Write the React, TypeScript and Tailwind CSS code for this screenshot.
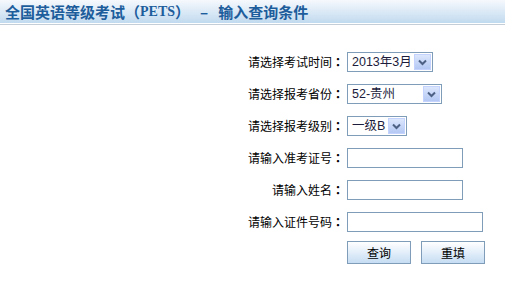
import React from "react";

const font = { fontFamily: '"Noto Sans CJK SC", "Noto Sans", sans-serif' };
const selFont = { fontFamily: '"Liberation Sans", "Noto Sans CJK SC", sans-serif' };
const tc = { fontFamily: '"Noto Sans CJK TC", sans-serif' };

function Arrow() {
  return (
    <div className="flex h-full w-[17px] items-center justify-center border border-[#c3d3fd] bg-gradient-to-b from-[#dce6fc] to-[#b4c8f4]">
      <svg width="9" height="7" viewBox="0 0 9 7">
        <path d="M1 1.5 L4.5 5 L8 1.5" fill="none" stroke="#4d6185" strokeWidth="2" />
      </svg>
    </div>
  );
}

function Select({ value, width }: { value: string; width: string }) {
  return (
    <div className={`flex h-[20px] ${width} items-stretch border border-[#7f9db9] bg-white p-[1px]`}>
      <div className="flex flex-1 items-center whitespace-nowrap pl-[3px] text-[12.5px] leading-none text-[#1c1c3c]" style={selFont}>
        {value}
      </div>
      <Arrow />
    </div>
  );
}

function Input({ width }: { width: string }) {
  return <div className={`h-[20px] ${width} border border-[#7f9db9] bg-white`} />;
}

function Row({ label, children }: { label: string; children: React.ReactNode }) {
  return (
    <div className="flex h-[32px] items-center">
      <div className="w-[344px] whitespace-nowrap text-right text-[12px] leading-none text-black" style={font}>
        {label}
        <span className="font-bold" style={tc}>：</span>
      </div>
      <div className="ml-[3px]">{children}</div>
    </div>
  );
}

function Button({ text }: { text: string }) {
  return (
    <div
      className="flex h-[23px] w-[64px] items-center justify-center border border-[#7f9db9] bg-gradient-to-b from-white to-[#c6ddf3] text-[12px] leading-none text-black"
      style={font}
    >
      {text}
    </div>
  );
}

export default function App() {
  return (
    <div className="h-[291px] w-[505px] overflow-hidden bg-white">
      <div className="flex h-[23px] items-center whitespace-nowrap bg-gradient-to-b from-[#f6f9fd] to-[#c1daef] pl-[5px] text-[15px] font-bold leading-none text-[#1d5d9c]" style={font}>
        <span>全国英语等级考试（</span>
        <span className="text-[14px]" style={{ fontFamily: '"Liberation Serif", serif' }}>PETS</span>
        <span>）</span>
        <span className="ml-[10px]">–</span>
        <span className="ml-[10px]">输入查询条件</span>
      </div>
      <div className="h-[1px] bg-white" />
      <div className="h-[1px] bg-[#c4ced8]" />
      <div className="mt-[21px]">
        <Row label="请选择考试时间">
          <Select value="2013年3月" width="w-[86px]" />
        </Row>
        <Row label="请选择报考省份">
          <Select value="52-贵州" width="w-[95px]" />
        </Row>
        <Row label="请选择报考级别">
          <Select value="一级B" width="w-[60px]" />
        </Row>
        <Row label="请输入准考证号">
          <Input width="w-[116px]" />
        </Row>
        <Row label="请输入姓名">
          <Input width="w-[116px]" />
        </Row>
        <Row label="请输入证件号码">
          <Input width="w-[136px]" />
        </Row>
        <div className="mt-[3px] flex gap-[10px] pl-[347px]">
          <Button text="查询" />
          <Button text="重填" />
        </div>
      </div>
    </div>
  );
}
